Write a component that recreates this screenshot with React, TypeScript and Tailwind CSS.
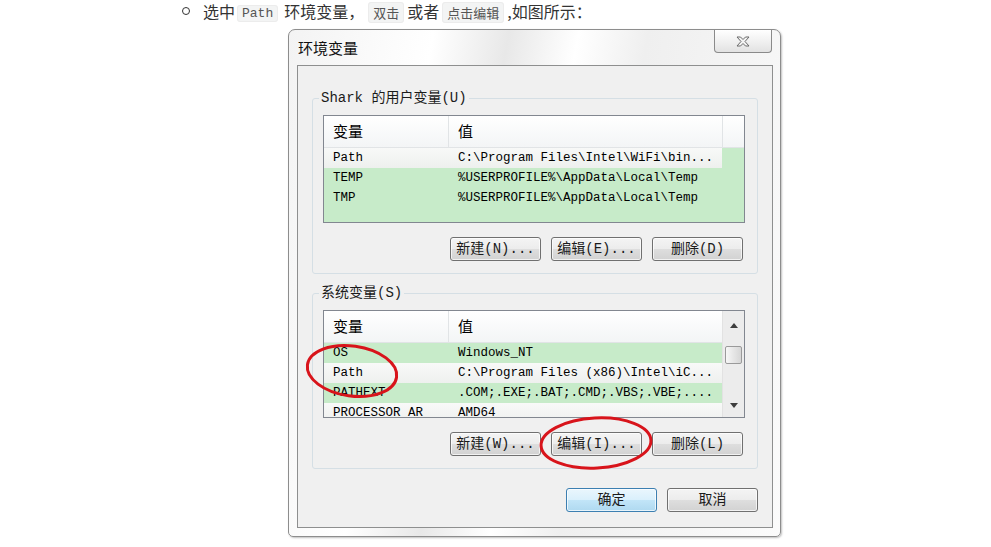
import clsx from "clsx";

type Row = { name: string; value: string; light?: boolean };

const userRows: Row[] = [
  { name: "Path", value: "C:\\Program Files\\Intel\\WiFi\\bin...", light: true },
  { name: "TEMP", value: "%USERPROFILE%\\AppData\\Local\\Temp" },
  { name: "TMP", value: "%USERPROFILE%\\AppData\\Local\\Temp" },
];

const sysRows: Row[] = [
  { name: "OS", value: "Windows_NT" },
  { name: "Path", value: "C:\\Program Files (x86)\\Intel\\iC...", light: true },
  { name: "PATHEXT", value: ".COM;.EXE;.BAT;.CMD;.VBS;.VBE;...." },
  { name: "PROCESSOR_AR", value: "AMD64", light: true },
];

const Btn = ({ children, primary }: { children: React.ReactNode; primary?: boolean }) => (
  <div
    className={clsx(
      "w-[91px] h-[24px] rounded-[3px] border flex items-center justify-center text-[14px] text-[#1b1b1b] shadow-[inset_0_0_0_1px_rgba(255,255,255,0.7)]",
      primary
        ? "border-[#3c7fb1] bg-[linear-gradient(#eaf6fd,#d9f0fc_50%,#c2e5f8_50%,#afd9f0)]"
        : "border-[#707070] bg-[linear-gradient(#f4f4f4,#ececec_50%,#dedede_50%,#d2d2d2)]"
    )}
  >
    {children}
  </div>
);

const Arrow = ({ up }: { up?: boolean }) => (
  <svg width="8" height="5" viewBox="0 0 8 5">
    <path d={up ? "M0 5 L4 0 L8 5 Z" : "M0 0 L8 0 L4 5 Z"} fill="#3d3d3d" />
  </svg>
);

const Scrollbar = () => (
  <div className="flex-1 flex flex-col items-center bg-[#ececec] border-l border-[#e2e2e2]">
    <div className="h-[28px] flex items-center">
      <Arrow up />
    </div>
    <div className="mt-[7px] w-[17px] h-[18px] rounded-[2px] border border-[#9a9a9a] bg-[linear-gradient(90deg,#f7f7f7,#e6e6e6_50%,#d6d6d6)]" />
    <div className="flex-1" />
    <div className="h-[24px] flex items-center">
      <Arrow />
    </div>
  </div>
);

const VarList = ({ rows, scroll }: { rows: Row[]; scroll?: boolean }) => (
  <div className="w-[422px] h-[108px] border border-[#828790] bg-[#c7ebc9] flex overflow-hidden">
    <div className="w-[398px] flex flex-col">
      <div className="h-[32px] shrink-0 flex bg-[linear-gradient(#ffffff,#f3f5f6)] border-b border-[#e1e4e6] text-[15px] font-['Noto_Sans_CJK_SC',sans-serif]">
        <div className="w-[125px] border-r border-[#e1e4e6] pl-[9px] flex items-center">变量</div>
        <div className="flex-1 pl-[9px] flex items-center">值</div>
      </div>
      {rows.map((r) => (
        <div
          key={r.name}
          className={clsx(
            "h-[20px] shrink-0 flex items-center text-[12.5px] text-black",
            r.light && "bg-[linear-gradient(#f8f9f8,#eef0ee)]"
          )}
        >
          <div className="w-[125px] pl-[9px] whitespace-nowrap">{r.name}</div>
          <div className="flex-1 pl-[9px] whitespace-nowrap">{r.value}</div>
        </div>
      ))}
    </div>
    {scroll ? (
      <Scrollbar />
    ) : (
      <div className="flex-1 flex flex-col">
        <div className="h-[32px] bg-[linear-gradient(#ffffff,#f3f5f6)] border-l border-b border-[#e1e4e6]" />
      </div>
    )}
  </div>
);

const Group = ({ label, rows, scroll, buttons }: { label: string; rows: Row[]; scroll?: boolean; buttons: string[] }) => (
  <fieldset className="border border-[#d5dfe5] rounded-[3px]">
    <legend className="ml-[6px] px-[2px] text-[14px] leading-[16px] text-[#1b1b1b]">{label}</legend>
    <div className="pt-[9px] pl-[10px] pr-[12px] pb-[12px]">
      <VarList rows={rows} scroll={scroll} />
      <div className="mt-[14px] flex justify-end gap-[10px] pr-[2px]">
        {buttons.map((b) => (
          <Btn key={b}>{b}</Btn>
        ))}
      </div>
    </div>
  </fieldset>
);

const Code = ({ children, mono }: { children: React.ReactNode; mono?: boolean }) => (
  <span
    className={clsx(
      "px-[4px] rounded-[3px] bg-[#f3f4f4] border border-[#ececec] text-[#555] leading-[18px]",
      mono ? "font-['Liberation_Mono',monospace] text-[13px] text-[#333]" : "text-[13px]"
    )}
  >
    {children}
  </span>
);

export default function App() {
  return (
    <div className="relative w-[991px] h-[547px] bg-white overflow-hidden font-['Liberation_Mono','Noto_Sans_CJK_SC',monospace]">
      <div className="h-[21px] flex items-center pl-[182px] text-[16px] text-[#333] font-['Noto_Sans_CJK_SC',sans-serif]">
        <span className="w-[8px] h-[8px] rounded-full border-[1.5px] border-[#333]" />
        <span className="ml-[13px]">选中</span>
        <span className="ml-[2px]">
          <Code mono>Path</Code>
        </span>
        <span className="ml-[6px]">环境变量，</span>
        <span className="ml-[4px]">
          <Code>双击</Code>
        </span>
        <span className="ml-[3px]">或者</span>
        <span className="ml-[3px]">
          <Code>点击编辑</Code>
        </span>
        <span className="ml-[3px]">,如图所示：</span>
      </div>

      <div className="mt-[8px] ml-[288px] w-[493px] border border-[#8d8d8d] rounded-t-[7px] rounded-b-[5px] bg-[linear-gradient(100deg,#f3f3f3,#ffffff_25%,#e8e8e8_38%,#ffffff_50%,#efefef_62%,#fbfbfb)] pl-[8px] pr-[7px] pb-[8px] shadow-[1px_1px_2px_rgba(0,0,0,0.25)]">
        <div className="h-[35px] flex justify-between items-start">
          <div className="pt-[10px] pl-[1px] text-[15px] leading-[16px] text-[#111] font-['Noto_Sans_CJK_SC',sans-serif]">
            环境变量
          </div>
          <div className="w-[58px] h-[23px] mr-[1px] rounded-b-[4px] border border-t-0 border-[#8a8a8a] bg-[linear-gradient(#ffffff,#f1f1f1_50%,#e2e2e2)] flex items-center justify-center">
            <svg width="14" height="11" viewBox="0 0 14 11">
              <path
                d="M1 1 H4.5 L7 3.5 L9.5 1 H13 L9 5.5 L13 10 H9.5 L7 7.5 L4.5 10 H1 L5 5.5 Z"
                fill="#f4f4f4"
                stroke="#6a6a6a"
                strokeWidth="1"
                strokeLinejoin="round"
              />
            </svg>
          </div>
        </div>

        <div className="h-[463px] border border-[#8e8f8f] bg-[#f0f0f0] pt-[24px] px-[14px] pb-[15px] flex flex-col">
          <Group label="Shark 的用户变量(U)" rows={userRows} buttons={["新建(N)...", "编辑(E)...", "删除(D)"]} />
          <div className="mt-[11px]">
            <Group label="系统变量(S)" rows={sysRows} scroll buttons={["新建(W)...", "编辑(I)...", "删除(L)"]} />
          </div>
          <div className="mt-auto flex justify-end gap-[10px]">
            <Btn primary>确定</Btn>
            <Btn>取消</Btn>
          </div>
        </div>
      </div>

      <svg className="absolute left-0 top-0 pointer-events-none" width="991" height="547">
        <ellipse cx="352" cy="371" rx="45" ry="25" transform="rotate(8 352 371)" fill="none" stroke="#d8141b" strokeWidth="3" />
        <ellipse cx="596" cy="443" rx="55" ry="25" transform="rotate(-3 596 443)" fill="none" stroke="#d8141b" strokeWidth="3" />
      </svg>
    </div>
  );
}
